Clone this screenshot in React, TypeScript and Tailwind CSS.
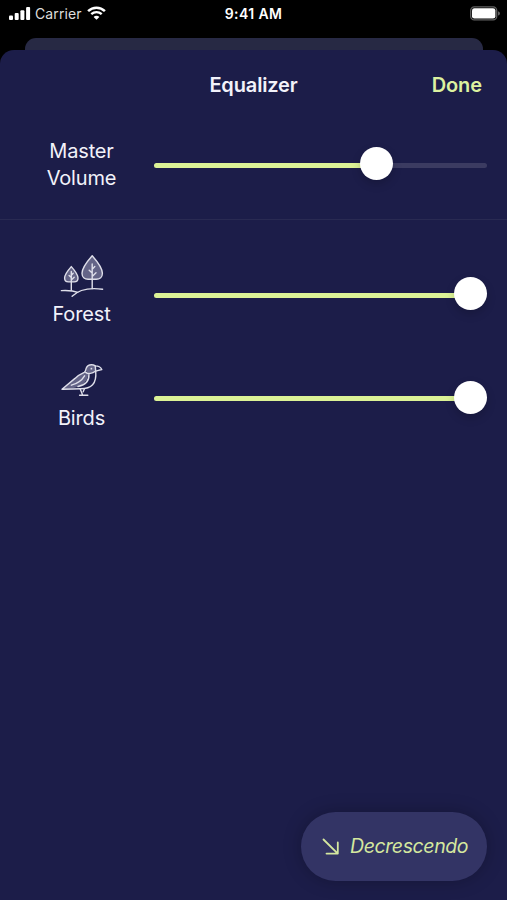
import type { ReactNode } from "react";

interface SliderProps {
  value: number;
}

function Slider({ value }: SliderProps) {
  return (
    <div className="relative h-[33px] w-[333px] shrink-0">
      <div className="absolute inset-x-0 top-[15.5px] h-[5px] rounded-full bg-[#3b3b61]" />
      <div
        className="absolute left-0 top-[15.5px] h-[5px] rounded-full bg-[#dcf296]"
        style={{ width: `${value}px` }}
      />
      <div
        className="absolute top-0 size-[33px] rounded-full bg-white shadow-[0_4px_10px_rgba(0,0,0,0.18)]"
        style={{ left: `${value - 16.5}px` }}
      />
    </div>
  );
}

interface ChannelProps {
  icon: ReactNode;
  label: string;
  value: number;
}

function Channel({ icon, label, value }: ChannelProps) {
  return (
    <div className="flex h-[103.5px] items-start">
      <div className="flex w-[154px] flex-col items-center pl-[9px]">
        {icon}
        <span className="mt-[2px] text-[20px] leading-[27px] tracking-[-0.15px]">{label}</span>
      </div>
      <div className="pt-[26px]">
        <Slider value={value} />
      </div>
    </div>
  );
}

function ForestIcon() {
  return (
    <svg
      className="h-[48px] w-[46px]"
      viewBox="0 0 46 48"
      fill="none"
      stroke="#dfdfea"
      strokeWidth="1.4"
      strokeLinecap="round"
      strokeLinejoin="round"
    >
      <path
        d="M33.2 4.7C29.4 9 23 17 23 22.3C23 26 25.6 28.3 29.1 28.3H37.3C40.8 28.3 43.4 26 43.4 22.3C43.4 17 37 9 33.2 4.7Z"
        fill="#646487"
      />
      <path
        d="M12.3 15.6C9.8 18.4 5.6 23.4 5.6 27C5.6 29.5 7.3 30.9 9.5 30.9H15.1C17.3 30.9 19 29.5 19 27C19 23.4 14.8 18.4 12.3 15.6Z"
        fill="#646487"
      />
      <path d="M33.2 13V37.6M33.2 18.2L35.8 15.6M33.2 22L30.2 19.2M33.2 25.4L37 21.8" />
      <path d="M12.3 20.5V39.3M12.3 24.2L14.2 22.3M12.3 26.5L10.1 24.5M12.3 29L15.2 26.3" />
      <path d="M2.4 39.6C8.4 39.3 14 39.5 19 41.3M13.1 45.2C19 39.4 29.4 36.3 43.6 38.2" />
    </svg>
  );
}

function BirdIcon() {
  return (
    <svg
      className="h-[48px] w-[46px]"
      viewBox="0 0 46 48"
      fill="none"
      stroke="#dfdfea"
      strokeWidth="1.4"
      strokeLinecap="round"
      strokeLinejoin="round"
    >
      <path
        d="M3 34.2L16 23.4C18.8 20.6 22.4 18.2 26.6 17.2L29.2 18.8C29 25.6 24.4 31.6 12.5 33.4Z"
        fill="#646487"
        stroke="none"
      />
      <path
        d="M27.2 16.6C26.7 12.4 29.2 10.2 32.4 10.2C34.6 10.2 36 11 36.6 12.4L36.2 15.8C33.8 18.2 29.6 18.6 27.2 16.6Z"
        fill="#646487"
        stroke="none"
      />
      <path
        d="M3 34.2L16 23.4C19.4 20.2 22.6 18.6 25.2 17.4C26.8 16.6 26.6 15 27.2 13.3C28 11 29.9 9.8 32.5 9.8C34 9.8 35.2 10.2 36.2 10.9C39.2 10.9 41.7 12.2 42.8 14.5L36.7 16.2C37.2 21.6 36.6 26.4 33.6 29.7C30.6 33 26.2 33.7 21.6 33.7C15.2 33.8 9 34 3 34.2Z"
      />
      <path d="M36.3 11L36.7 16.2M26.7 17.4C29 19.2 33.6 18.6 36.3 16.2M29.9 19.2C30.4 25.5 26.2 30 19 31.5M25.6 20.8C22.6 25.7 18 28.6 12.4 30.2" />
      <path d="M21.2 34L23.6 40.1M25.4 33.8L24.2 36.8M20.6 40.3H28.8" />
      <circle cx="32.4" cy="13.7" r="0.9" fill="#dfdfea" stroke="none" />
    </svg>
  );
}

function StatusBar() {
  return (
    <div className="grid h-[38px] grid-cols-3 pt-[4px] text-white">
      <div className="flex h-[20px] items-center pl-[9px]">
        <svg className="mb-[2px] h-[13px] w-[22px]" viewBox="0 0 22 13" fill="white">
          <rect x="0" y="8.6" width="4" height="4.4" rx="1" />
          <rect x="5.7" y="6" width="4" height="7" rx="1" />
          <rect x="11.4" y="3.2" width="4" height="9.8" rx="1" />
          <rect x="17.1" y="0" width="4" height="13" rx="1" />
        </svg>
        <span className="ml-[4px] text-[14px] leading-[20px] tracking-[0.12px] text-[#dddddd]">
          Carrier
        </span>
        <svg
          className="mb-[2px] ml-[5px] h-[14px] w-[19px]"
          viewBox="0 0 19 14"
          fill="none"
          stroke="white"
        >
          <path d="M1.1 5.1C5.8 0.5 13.2 0.5 17.9 5.1" strokeWidth="2.5" />
          <path d="M4.3 8.2C7.3 5.4 11.7 5.4 14.7 8.2" strokeWidth="2.4" />
          <path d="M9.5 13.8L6.6 10.9C8.2 9.5 10.8 9.5 12.4 10.9Z" fill="white" stroke="none" />
        </svg>
      </div>
      <div className="text-center text-[14px] font-semibold leading-[20px] tracking-[0.4px]">
        9:41 AM
      </div>
      <div className="flex h-[20px] items-center justify-end pr-[6px]">
        <svg className="mb-[2px] h-[15px] w-[31px]" viewBox="0 0 31 15">
          <rect x="0.7" y="0.9" width="26" height="13" rx="3.6" fill="none" stroke="#626262" strokeWidth="1.3" />
          <rect x="2" y="2.2" width="23.4" height="10.4" rx="2.4" fill="white" />
          <path d="M28 5.2C30.7 6 30.7 8.8 28 9.6Z" fill="#626262" />
        </svg>
      </div>
    </div>
  );
}

export default function App() {
  return (
    <div className="flex h-[900px] w-[507px] flex-col overflow-hidden bg-black font-['Inter',sans-serif] text-[#f2f2fa]">
      <StatusBar />
      <div className="ml-[25px] h-[12px] w-[458px] shrink-0 rounded-t-[11px] bg-[#272944]" />
      <main className="flex flex-1 flex-col rounded-t-[14px] bg-[#1c1d49]">
        <header className="grid h-[69px] grid-cols-3 items-center">
          <h1 className="col-start-2 text-center text-[20px] font-semibold tracking-[-0.15px]">
            Equalizer
          </h1>
          <button className="pr-[25px] text-right text-[20px] font-semibold tracking-[-0.1px] text-[#dcf2a0]">
            Done
          </button>
        </header>

        <section className="flex h-[101px] items-start border-b border-[#292a52]">
          <div className="w-[154px] pl-[9px] pt-[19px] text-center text-[20px] leading-[27px] tracking-[-0.15px]">
            Master
            <br />
            Volume
          </div>
          <div className="pt-[28px]">
            <Slider value={222.5} />
          </div>
        </section>

        <section className="flex flex-col pt-[31px]">
          <Channel icon={<ForestIcon />} label="Forest" value={316.5} />
          <Channel icon={<BirdIcon />} label="Birds" value={316.5} />
        </section>

        <button className="mb-[19px] ml-auto mr-[20px] mt-auto flex h-[69px] w-[186px] items-center rounded-full bg-[#333465] pl-[21px] text-[#d5e89f] shadow-[0_0_18px_rgba(0,0,0,0.25)]">
          <svg
            className="h-[18px] w-[18px]"
            viewBox="0 0 18 18"
            fill="none"
            stroke="currentColor"
            strokeWidth="1.8"
            strokeLinecap="round"
            strokeLinejoin="round"
          >
            <path d="M1.5 1.5L15.8 15.6M15.8 4.5V15.6H4.5" />
          </svg>
          <span className="ml-[10px] pt-px text-[19.5px] italic tracking-[-0.4px]">Decrescendo</span>
        </button>
      </main>
    </div>
  );
}
